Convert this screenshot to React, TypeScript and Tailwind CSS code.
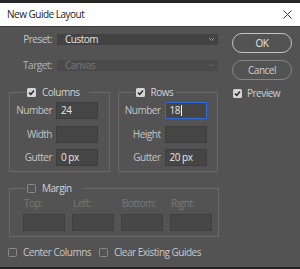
import React from "react";

function Check({ checked }: { checked?: boolean }) {
  if (checked) {
    return (
      <span className="w-[9px] h-[9px] rounded-[1.5px] bg-[#d4d4d4] flex items-center justify-center shrink-0">
        <svg width="7" height="7" viewBox="0 0 7 7">
          <path d="M1 3.6 L2.8 5.3 L6 1.6" fill="none" stroke="#2e2e2e" strokeWidth="1.5" />
        </svg>
      </span>
    );
  }
  return <span className="block w-[9px] h-[9px] rounded-[1.5px] border border-[#8a8a8a] shrink-0" />;
}

function Field({ label, value, focused }: { label: string; value?: string; focused?: boolean }) {
  return (
    <div className="flex items-center gap-[4px]">
      <span className="w-[42px] text-right text-[#c4c4c4]">{label}</span>
      <div
        className={
          focused
            ? "w-[42px] h-[17px] bg-[#454545] border border-[#2f6ad6] flex items-center pl-[4px] text-[#e8e8e8]"
            : "w-[42px] h-[17px] bg-[#454545] border border-[#3d3d3d] flex items-center pl-[4px] text-[#e8e8e8]"
        }
      >
        {value}
        {focused && <span className="w-[1px] h-[11px] bg-[#f0f0f0] ml-[1px]" />}
      </div>
    </div>
  );
}

function Chevron({ color }: { color: string }) {
  return (
    <svg width="7" height="5" viewBox="0 0 7 5">
      <path d="M1 1 L3.5 3.5 L6 1" fill="none" stroke={color} strokeWidth="1" />
    </svg>
  );
}

export default function App() {
  return (
    <div className="w-[300px] h-[269px] bg-[#535353] flex flex-col overflow-hidden font-['Open_Sans',sans-serif] text-[10px] leading-[11px] tracking-[-0.5px]">
      <div className="h-[3px] bg-[#262626] shrink-0" />
      <div className="h-[24px] bg-white border-b border-[#3c3c3c] flex items-center justify-between pl-[7px] pr-[8px] shrink-0">
        <span className="text-[#1c1c1c] text-[10px]">New Guide Layout</span>
        <svg width="9" height="9" viewBox="0 0 9 9">
          <path d="M0.5 0.5 L8.5 8.5 M8.5 0.5 L0.5 8.5" stroke="#3a3a3a" strokeWidth="1" />
        </svg>
      </div>
      <div className="flex-1 flex pl-[9px]">
        <div className="w-[209px] pt-[7px] flex flex-col">
          <div className="flex items-center gap-[5px] h-[11px]">
            <span className="w-[43px] text-right text-[#c4c4c4]">Preset:</span>
            <div className="w-[161px] h-[11px] bg-[#434343] flex items-center justify-between pl-[8px] pr-[3px] text-[#e4e4e4]">
              <span>Custom</span>
              <Chevron color="#a0a0a0" />
            </div>
          </div>
          <div className="flex items-center gap-[5px] h-[11px] mt-[15px]">
            <span className="w-[43px] text-right text-[#b4b4b4]">Target:</span>
            <div className="w-[161px] h-[11px] bg-[#4a4a4a] flex items-center justify-between pl-[8px] pr-[3px] text-[#767676]">
              <span>Canvas</span>
              <Chevron color="#6a6a6a" />
            </div>
          </div>
          <div className="flex gap-[8px] mt-[16px]">
            <fieldset className="w-[101px] border border-[#6a6a6a] pb-[5px] pt-[5px]">
              <legend className="ml-[16px] pl-[1px] pr-[9px]">
                <div className="h-[10px] flex items-center gap-[6px] text-[#d2d2d2]">
                  <Check checked />
                  <span>Columns</span>
                </div>
              </legend>
              <div className="flex flex-col gap-[6.5px]">
                <Field label="Number" value="24" />
                <Field label="Width" />
                <Field label="Gutter" value="0 px" />
              </div>
            </fieldset>
            <fieldset className="w-[101px] border border-[#6a6a6a] pb-[5px] pt-[5px]">
              <legend className="ml-[16px] pl-[1px] pr-[3px]">
                <div className="h-[10px] flex items-center gap-[6px] text-[#d2d2d2]">
                  <Check checked />
                  <span>Rows</span>
                </div>
              </legend>
              <div className="flex flex-col gap-[6.5px]">
                <Field label="Number" value="18" focused />
                <Field label="Height" />
                <Field label="Gutter" value="20 px" />
              </div>
            </fieldset>
          </div>
          <fieldset className="w-[210px] border border-[#6a6a6a] mt-[11px] pb-[5px]">
            <legend className="ml-[16px] pl-[1px] pr-[11px]">
              <div className="h-[10px] flex items-center gap-[6px] text-[#d2d2d2]">
                <Check />
                <span>Margin</span>
              </div>
            </legend>
            <div className="grid grid-cols-[42px_42px_42px_42px] gap-x-[7px] gap-y-[5px] pt-[5px] pl-[13px] text-[#787878]">
              <span className="pl-[1px]">Top:</span>
              <span className="pl-[1px]">Left:</span>
              <span className="pl-[1px]">Bottom:</span>
              <span className="pl-[1px]">Right:</span>
              <div className="h-[17px] bg-[#474747] border border-[#3f3f3f]" />
              <div className="h-[17px] bg-[#474747] border border-[#3f3f3f]" />
              <div className="h-[17px] bg-[#474747] border border-[#3f3f3f]" />
              <div className="h-[17px] bg-[#474747] border border-[#3f3f3f]" />
            </div>
          </fieldset>
          <div className="flex items-center h-[9px] mt-[11px] -ml-[1px] text-[#c8c8c8]">
            <Check />
            <span className="ml-[6px]">Center Columns</span>
            <div className="ml-[8px] flex items-center">
              <Check />
            </div>
            <span className="ml-[6px]">Clear Existing Guides</span>
          </div>
        </div>
        <div className="ml-[14px] w-[60px] pt-[6px] flex flex-col">
          <div className="h-[20px] rounded-full border border-[#c4c4c4] flex items-center justify-center text-[#e6e6e6]">
            OK
          </div>
          <div className="h-[20px] mt-[7px] rounded-full border border-[#858585] flex items-center justify-center text-[#d0d0d0]">
            Cancel
          </div>
          <div className="flex items-center gap-[5px] mt-[9px] ml-[1px] h-[9px] text-[#cfcfcf]">
            <Check checked />
            <span>Preview</span>
          </div>
        </div>
      </div>
      <div className="h-[2px] bg-[#222222] shrink-0" />
    </div>
  );
}
